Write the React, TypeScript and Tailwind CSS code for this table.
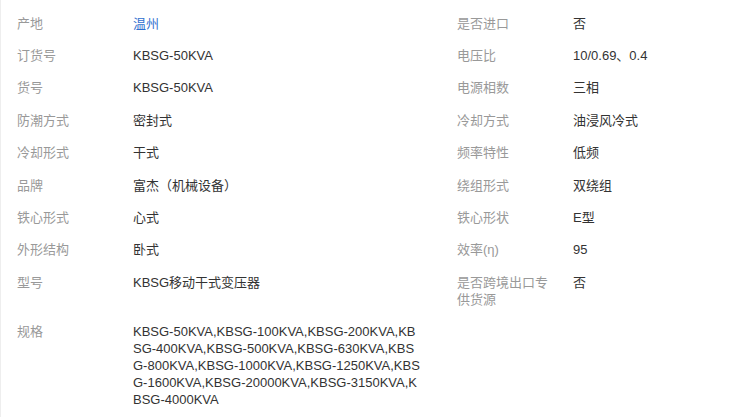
import React from 'react';

type Item = { label: string; value: string; link?: boolean };

const rows: [Item, Item | null][] = [
  [{ label: '产地', value: '温州', link: true }, { label: '是否进口', value: '否' }],
  [{ label: '订货号', value: 'KBSG-50KVA' }, { label: '电压比', value: '10/0.69、0.4' }],
  [{ label: '货号', value: 'KBSG-50KVA' }, { label: '电源相数', value: '三相' }],
  [{ label: '防潮方式', value: '密封式' }, { label: '冷却方式', value: '油浸风冷式' }],
  [{ label: '冷却形式', value: '干式' }, { label: '频率特性', value: '低频' }],
  [{ label: '品牌', value: '富杰（机械设备）' }, { label: '绕组形式', value: '双绕组' }],
  [{ label: '铁心形式', value: '心式' }, { label: '铁心形状', value: 'E型' }],
  [{ label: '外形结构', value: '卧式' }, { label: '效率(η)', value: '95' }],
  [{ label: '型号', value: 'KBSG移动干式变压器' }, { label: '是否跨境出口专供货源', value: '否' }],
  [
    {
      label: '规格',
      value:
        'KBSG-50KVA,KBSG-100KVA,KBSG-200KVA,KBSG-400KVA,KBSG-500KVA,KBSG-630KVA,KBSG-800KVA,KBSG-1000KVA,KBSG-1250KVA,KBSG-1600KVA,KBSG-20000KVA,KBSG-3150KVA,KBSG-4000KVA',
    },
    null,
  ],
];

function Cell({ item }: { item: Item | null }) {
  if (!item) return <div />;
  return (
    <div className="flex py-[7.7px]">
      <div className="w-[116px] shrink-0 pr-[16px] text-[#999]">{item.label}</div>
      <div
        className={`w-[290px] break-all [hyphens:none] ${item.link ? 'text-[#2f6fcf]' : 'text-[#333]'}`}
      >
        {item.value}
      </div>
    </div>
  );
}

export default function App() {
  return (
    <main
      className="w-[748px] h-[417px] overflow-hidden bg-white border-l border-[#eee] pl-[16px] pt-[7px] text-[13px] leading-[17px]"
      style={{ fontFamily: '"Liberation Sans", Arial, "Noto Sans CJK SC", sans-serif' }}
    >
      <div className="grid grid-cols-[440px_1fr]">
        {rows.map(([a, b], i) => (
          <React.Fragment key={i}>
            <Cell item={a} />
            <Cell item={b} />
          </React.Fragment>
        ))}
      </div>
    </main>
  );
}
